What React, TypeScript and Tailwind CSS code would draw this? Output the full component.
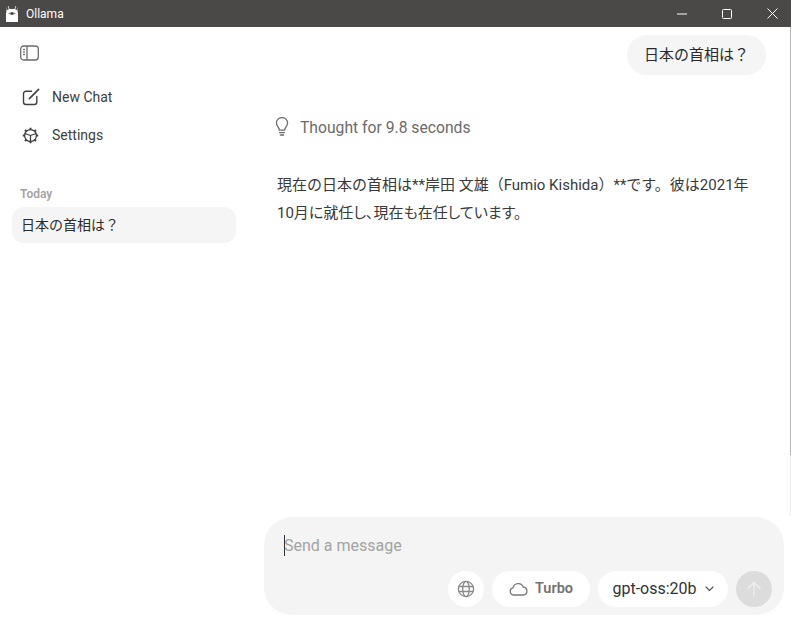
import React from "react";

function OllamaLogo() {
  return (
    <svg width="14" height="18" viewBox="0 0 14 18" fill="none">
      <path d="M2 1 L3.5 1 L4.5 4 L9.5 4 L10.5 1 L12 1 L12.5 6 L13 8 L13 17 L1 17 L1 8 L1.5 6 Z" fill="#fff" />
      <path d="M2.2 1 L3 1 L3.6 4.5 L2.2 5 Z M11 1 L11.8 1 L11.8 5 L10.4 4.5 Z" fill="#222" />
      <path d="M3 8.5 Q7 5.5 11 8.5 Q7 11 3 8.5 Z" fill="#8a8a88" />
      <circle cx="7" cy="8.6" r="1.2" fill="#333" />
    </svg>
  );
}

function SidebarIcon() {
  return (
    <svg width="19" height="16" viewBox="0 0 19 16" fill="none" stroke="#6b6b6b" strokeWidth="1.3">
      <rect x="0.7" y="1" width="17.6" height="14" rx="3" />
      <path d="M7 1 V15" />
      <path d="M3.6 4.5 H4.4 M3.6 7 H4.4 M3.6 9.5 H4.4" strokeLinecap="round" />
    </svg>
  );
}

function NewChatIcon() {
  return (
    <svg width="18" height="18" viewBox="0 0 18 18" fill="none" stroke="#3f3f3f" strokeWidth="1.4" strokeLinecap="round">
      <path d="M9.5 3.2 H4 A2.5 2.5 0 0 0 1.5 5.7 V14 A2.5 2.5 0 0 0 4 16.5 H12.3 A2.5 2.5 0 0 0 14.8 14 V8.5" />
      <path d="M7.4 10.6 L16.6 1.4" strokeWidth="1.6" />
    </svg>
  );
}

function GearIcon() {
  return (
    <svg width="17" height="17" viewBox="0 0 17 17" fill="none" stroke="#3f3f3f" strokeWidth="1.3">
      <circle cx="8.5" cy="8.5" r="5.9" />
      <path d="M8.5 8.5 L2.9 6.5 M8.5 8.5 L14.1 6.5 M8.5 8.5 L8.5 14.4" />
      <path
        d="M8.5 0.8 V2.6 M8.5 14.4 V16.2 M0.8 8.5 H2.6 M14.4 8.5 H16.2 M3 3 L4.3 4.3 M12.7 12.7 L14 14 M3 14 L4.3 12.7 M12.7 4.3 L14 3"
        strokeWidth="2"
      />
    </svg>
  );
}

function BulbIcon() {
  return (
    <svg width="14" height="20" viewBox="0 0 14 20" fill="none" stroke="#6b6b6b" strokeWidth="1.3" strokeLinecap="round">
      <path d="M4.4 13.2 C4.4 10.5 1.4 9.5 1.4 5.8 A5.6 5.2 0 0 1 12.6 5.8 C12.6 9.5 9.6 10.5 9.6 13.2 Z" />
      <path d="M4.6 15.6 H9.4 M5.4 18 H8.6" />
    </svg>
  );
}

function GlobeIcon() {
  return (
    <svg width="18" height="18" viewBox="0 0 18 18" fill="none" stroke="#8a8a8a" strokeWidth="1.3">
      <circle cx="9" cy="9" r="7.6" />
      <ellipse cx="9" cy="9" rx="3.3" ry="7.6" />
      <path d="M1.6 6.5 H16.4 M1.6 11.5 H16.4" />
    </svg>
  );
}

function CloudIcon() {
  return (
    <svg width="20" height="14" viewBox="0 0 20 14" fill="none" stroke="#7a7a7a" strokeWidth="1.3" strokeLinejoin="round">
      <path d="M4.6 13 A3.6 3.6 0 0 1 4 5.9 A5.4 5.4 0 0 1 14.3 5 A4.1 4.1 0 0 1 15 13 Z" />
    </svg>
  );
}

function Chevron() {
  return (
    <svg width="9" height="6" viewBox="0 0 9 6" fill="none" stroke="#555" strokeWidth="1.1" strokeLinecap="round" strokeLinejoin="round">
      <path d="M1 1 L4.5 4.5 L8 1" />
    </svg>
  );
}

function ArrowUp() {
  return (
    <svg width="14" height="16" viewBox="0 0 14 16" fill="none" stroke="#f0f0f0" strokeWidth="1.3" strokeLinecap="round" strokeLinejoin="round">
      <path d="M7 15 V1.5 M1 7.5 L7 1.5 L13 7.5" />
    </svg>
  );
}

export default function App() {
  return (
    <div className="flex h-[624px] w-[791px] flex-col overflow-hidden bg-white font-['Roboto','Noto_Sans_CJK_JP',sans-serif] text-[#2b2b2b]">
      <header className="flex h-[27px] shrink-0 items-center bg-[#4a4947] text-white">
        <div className="ml-[5px] flex w-[14px] items-center"><OllamaLogo /></div>
        <span className="ml-[7px] text-xs">Ollama</span>
        <div className="ml-auto mr-[13px] flex items-center gap-[35px]">
          <svg width="10" height="2" viewBox="0 0 10 2"><path d="M0 1 H10" stroke="#fff" /></svg>
          <svg width="10" height="10" viewBox="0 0 10 10" fill="none"><rect x="0.5" y="0.5" width="9" height="9" rx="1" stroke="#fff" /></svg>
          <svg width="11" height="11" viewBox="0 0 11 11" fill="none" stroke="#fff"><path d="M0.5 0.5 L10.5 10.5 M10.5 0.5 L0.5 10.5" /></svg>
        </div>
      </header>

      <div className="flex min-h-0 flex-1">
        <aside className="flex w-[248px] shrink-0 flex-col px-3">
          <div className="ml-2 mt-[18px] flex h-4 items-center"><SidebarIcon /></div>
          <nav className="mt-[27px] flex flex-col gap-5">
            <div className="flex h-[18px] items-center gap-[12px] pl-[10px] text-sm">
              <NewChatIcon /><span className="text-[#3d3d3d]">New Chat</span>
            </div>
            <div className="flex h-[18px] items-center gap-[13px] pl-[10px] text-sm">
              <GearIcon /><span className="text-[#3d3d3d]">Settings</span>
            </div>
          </nav>
          <div className="ml-2 mt-[42px] text-xs leading-4 font-semibold text-[#a3a3a3]">Today</div>
          <div className="mt-[5px] flex h-9 items-center rounded-xl bg-[#f5f5f5] pl-[9px] text-sm">日本の首相は？</div>
        </aside>

        <main className="flex min-w-0 flex-1 flex-col">
          <div className="relative flex min-h-0 flex-1 flex-col">
            <div className="absolute right-0 top-0 flex h-[489px] w-px flex-col bg-[#eeeeee]">
              <div className="h-[428px] bg-[#b4b4b4]" />
            </div>
            <div className="mt-2 flex justify-end pr-[25px]">
              <div className="flex h-10 items-center rounded-[20px] bg-[#f5f5f5] px-[17px] text-[15px]">日本の首相は？</div>
            </div>
            <div className="ml-[27px] mt-[42px] flex h-5 items-center gap-[11px] text-[15.7px] text-[#6b6b6b]">
              <BulbIcon /><span className="pt-0.5">Thought for 9.8 seconds</span>
            </div>
            <p className="ml-[29px] mt-[34px] w-[480px] text-[15px] leading-7 text-[#3a3a3a]">
              現在の日本の首相は**岸田 文雄（Fumio Kishida）**です。彼は2021年10月<span className="[font-feature-settings:'palt']">に就任し、現在も在任しています。</span>
            </p>
          </div>

          <div className="mb-[9px] ml-4 mr-[7px] flex h-[98px] shrink-0 flex-col rounded-[28px] bg-[#f4f4f4]">
            <div className="relative ml-5 mt-[18px] h-[21px] text-base leading-[21px] text-[#a3a3a3]">
              <span className="absolute left-0 top-0 h-[21px] w-px bg-[#333]" />
              Send a message
            </div>
            <div className="mt-auto mb-2 mr-3 flex items-center justify-end gap-2">
              <div className="flex size-9 items-center justify-center rounded-full bg-white"><GlobeIcon /></div>
              <div className="flex h-9 w-[98px] items-center justify-center gap-[6px] rounded-full bg-white text-[14.5px] font-semibold text-[#737373]">
                <CloudIcon /><span>Turbo</span>
              </div>
              <div className="flex h-9 w-[130px] items-center justify-center gap-[8px] rounded-full bg-white text-base text-[#333]">
                <span>gpt-oss:20b</span><Chevron />
              </div>
              <div className="flex size-9 items-center justify-center rounded-full bg-[#dcdcdc]"><ArrowUp /></div>
            </div>
          </div>
        </main>
      </div>
    </div>
  );
}
